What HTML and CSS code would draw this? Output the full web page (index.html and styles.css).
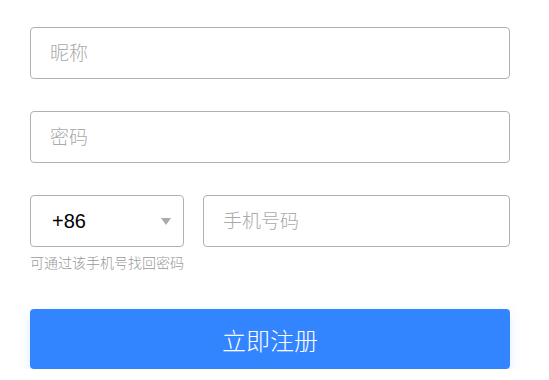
FILE: index.html
```html
<!DOCTYPE html>
<html lang="zh-CN">
<head>
  <meta charset="UTF-8">
  <title>注册</title>
  <link rel="stylesheet" href="styles.css">
</head>
<body>
  <form class="register-form">
    <div class="form-row">
      <input class="text-input" type="text" placeholder="昵称">
    </div>
    <div class="form-row">
      <input class="text-input" type="password" placeholder="密码">
    </div>
    <div class="form-row phone-row">
      <div class="phone-fields">
        <div class="area-select">
          <span class="area-code">+86</span>
          <span class="select-arrow"></span>
        </div>
        <input class="text-input phone-input" type="text" placeholder="手机号码">
      </div>
      <p class="field-hint">可通过该手机号找回密码</p>
    </div>
    <button class="submit-button" type="button">立即注册</button>
  </form>
</body>
</html>
```

FILE: styles.css
```css
* {
  margin: 0;
  padding: 0;
  box-sizing: border-box;
}

body {
  font-family: "Noto Sans CJK SC", "Liberation Sans", sans-serif;
  background: #fff;
  color: #333;
}

.register-form {
  width: 480px;
  margin: 27px 0 0 30px;
  display: flex;
  flex-direction: column;
}

.form-row {
  margin-bottom: 32px;
}

.text-input {
  display: block;
  width: 100%;
  height: 52px;
  padding: 0 19px 3px;
  border: 1px solid #b1b1b1;
  border-radius: 4px;
  font-family: inherit;
  font-size: 19px;
  font-weight: 300;
  color: #333;
  outline: none;
  background: #fff;
}

.text-input::placeholder {
  color: #aaa;
}

.phone-row {
  margin-bottom: 38px;
}

.phone-fields {
  display: flex;
  gap: 19px;
}

.area-select {
  flex: 0 0 154px;
  height: 52px;
  border: 1px solid #b1b1b1;
  border-radius: 4px;
  display: flex;
  align-items: center;
  justify-content: space-between;
  padding: 0 12px 0 21px;
}

.area-code {
  font-family: "Liberation Sans", sans-serif;
  font-size: 20px;
  color: #000;
}

.select-arrow {
  width: 0;
  height: 0;
  border-left: 5px solid transparent;
  border-right: 5px solid transparent;
  border-top: 7px solid #aaa;
}

.phone-input {
  flex: 1;
}

.field-hint {
  margin-top: 6px;
  font-size: 14px;
  line-height: 18px;
  font-weight: 300;
  color: #999;
}

.submit-button {
  height: 60px;
  border: none;
  border-radius: 4px;
  background: #3385ff;
  color: #fff;
  font-family: inherit;
  font-size: 24px;
  font-weight: 300;
  cursor: pointer;
  box-shadow: 0 4px 12px rgba(51, 133, 255, 0.15);
}
```
